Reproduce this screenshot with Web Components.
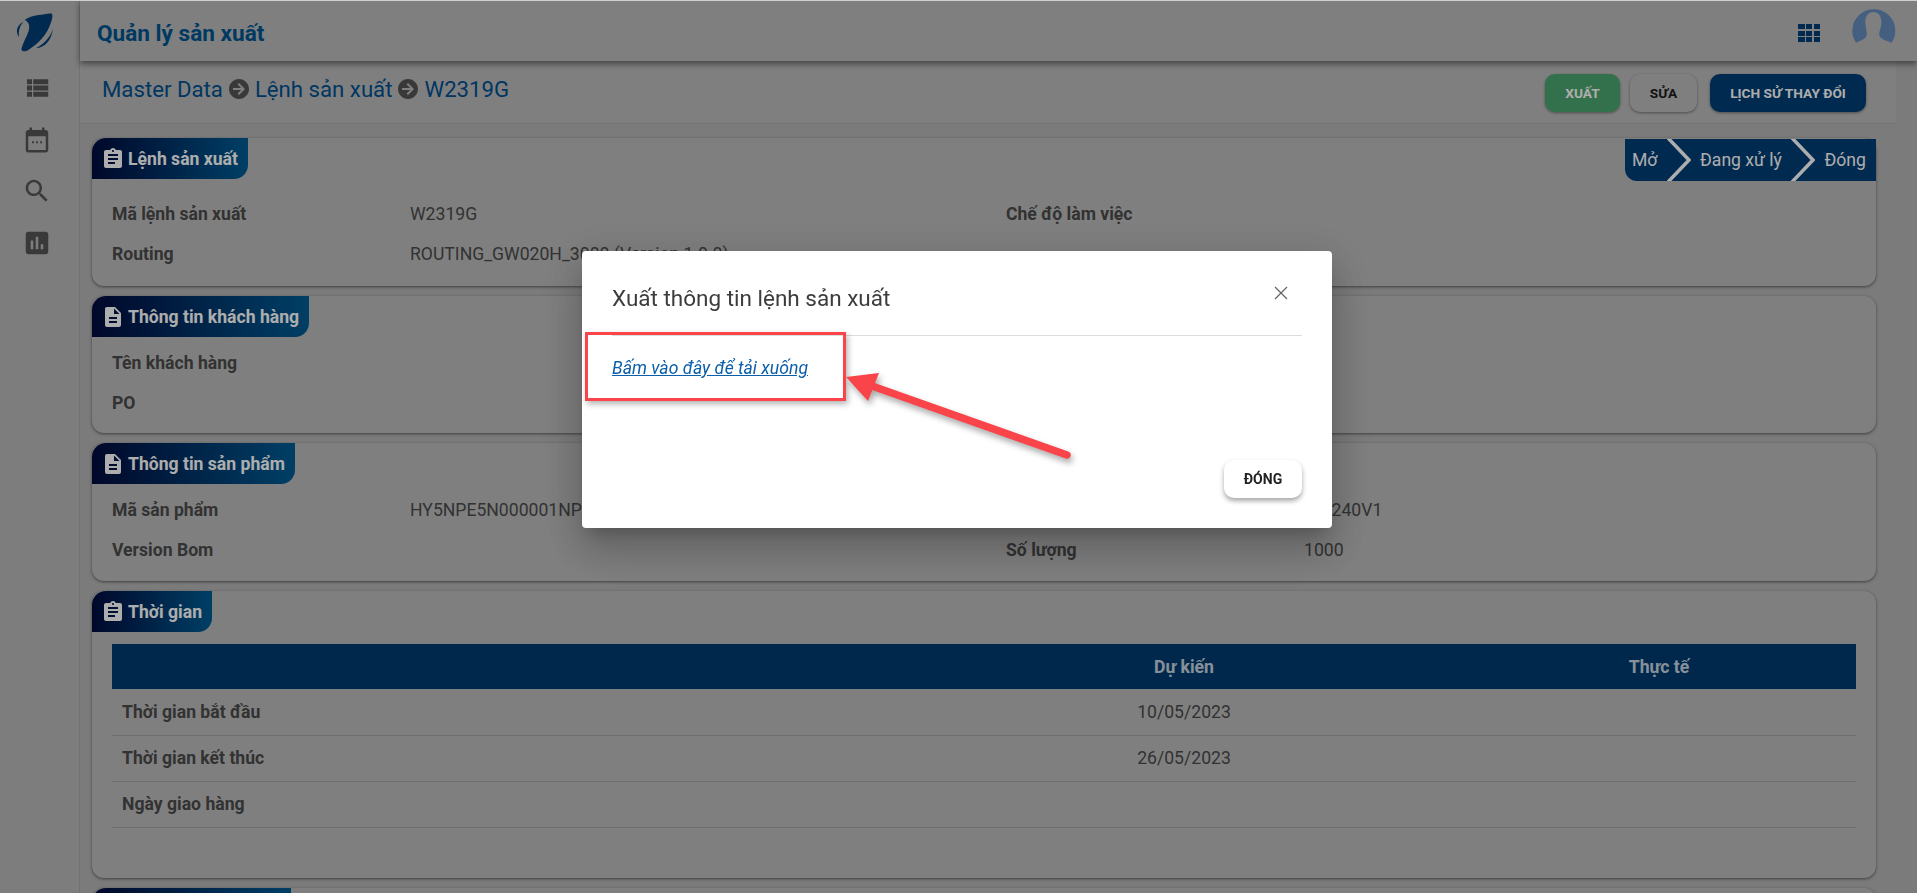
<!DOCTYPE html>
<html lang="vi">
<head>
<meta charset="utf-8">
<title>Quản lý sản xuất</title>
<style>
  html, body { margin: 0; height: 100%; overflow: hidden; }
  body { font-family: Roboto, "Liberation Sans", sans-serif; background: #b5b5b5; color: #4a4a4a; }
</style>
</head>
<body>
<app-shell>
  <side-nav slot="nav"></side-nav>
  <top-bar slot="top" heading="Quản lý sản xuất"></top-bar>
  <page-head slot="top"></page-head>

  <info-card heading="Lệnh sản xuất" icon="assignment" style="--body-pad:15px 20px 12px">
    <step-bar slot="aside" steps="Mở,Đang xử lý,Đóng"></step-bar>
    <info-row label="Mã lệnh sản xuất" value="W2319G" label2="Chế độ làm việc"></info-row>
    <info-row label="Routing" value="ROUTING_GW020H_3000 (Version 1.0.0)"></info-row>
  </info-card>

  <info-card heading="Thông tin khách hàng" icon="description" style="--body-pad:6px 20px 10px">
    <info-row label="Tên khách hàng"></info-row>
    <info-row label="PO"></info-row>
  </info-card>

  <info-card heading="Thông tin sản phẩm" icon="description" style="--body-pad:6px 20px 11px">
    <info-row label="Mã sản phẩm" value="HY5NPE5N000001NP" value2="GW240V1"></info-row>
    <info-row label="Version Bom" label2="Số lượng" value2="1000"></info-row>
  </info-card>

  <info-card heading="Thời gian" icon="assignment" style="--body-pad:12px 20px 50px">
    <time-table></time-table>
  </info-card>

  <info-card icon="none" style="--tab-width:199px"></info-card>
</app-shell>

<export-dialog heading="Xuất thông tin lệnh sản xuất" link="Bấm vào đây để tải xuống" close="ĐÓNG"></export-dialog>

<script>
const ICONS = {
  assignment: "M19 3h-4.18C14.4 1.84 13.3 1 12 1c-1.3 0-2.4.84-2.82 2H5c-1.1 0-2 .9-2 2v14c0 1.1.9 2 2 2h14c1.1 0 2-.9 2-2V5c0-1.1-.9-2-2-2zm-7 0c.55 0 1 .45 1 1s-.45 1-1 1-1-.45-1-1 .45-1 1-1zm2 14H7v-2h7v2zm3-4H7v-2h10v2zm0-4H7V7h10v2z",
  description: "M14 2H6c-1.1 0-1.99.9-1.99 2L4 20c0 1.1.89 2 1.99 2H18c1.1 0 2-.9 2-2V8l-6-6zm2 16H8v-2h8v2zm0-4H8v-2h8v2zm-3-5V3.5L18.5 9H13z",
  list: "M4 14h4v-4H4v4zm0 5h4v-4H4v4zM4 9h4V5H4v4zm5 5h12v-4H9v4zm0 5h12v-4H9v4zM9 5v4h12V5H9z",
  calendar: "M19 4h-1V2h-2v2H8V2H6v2H5c-1.11 0-2 .9-2 2v14c0 1.1.89 2 2 2h14c1.1 0 2-.9 2-2V6c0-1.1-.9-2-2-2zm0 16H5V9h14v11zM8 13h1.5v1.5H8zm3.25 0h1.5v1.5h-1.5zm3.25 0H16v1.5h-1.5z",
  search: "M15.5 14h-.79l-.28-.27C15.41 12.59 16 11.11 16 9.5 16 5.91 13.09 3 9.5 3S3 5.91 3 9.5 5.91 16 9.5 16c1.61 0 3.09-.59 4.23-1.57l.27.28v.79l5 4.99L20.49 19l-4.99-5zm-6 0C7.01 14 5 11.99 5 9.5S7.01 5 9.5 5 14 7.01 14 9.5 11.99 14 9.5 14z",
  chart: "M19 3H5c-1.1 0-2 .9-2 2v14c0 1.1.9 2 2 2h14c1.1 0 2-.9 2-2V5c0-1.1-.9-2-2-2zM9 17H7v-7h2v7zm4 0h-2V7h2v10zm4 0h-2v-4h2v4z",
  arrowCircle: "M12 2C6.48 2 2 6.48 2 12s4.48 10 10 10 10-4.48 10-10S17.52 2 12 2zm0 16l-1.4-1.4 3.6-3.6H6v-2h8.2l-3.6-3.6L12 6l6 6-6 6z"
};
const icon = (name, size, color) =>
  `<svg width="${size}" height="${size}" viewBox="0 0 24 24" fill="${color}" fill-rule="evenodd" style="display:block;flex:none"><path d="${ICONS[name]}"/></svg>`;

class AppShell extends HTMLElement {
  constructor() {
    super();
    this.attachShadow({ mode: "open" });
    this.shadowRoot.innerHTML = `
      <style>
        :host { display: flex; height: 100vh; overflow: hidden; }
        .main { flex: 1; min-width: 0; display: flex; flex-direction: column; }
        .content { display: flex; flex-direction: column; gap: 10px; margin: 14px 41px 0 12px; }
      </style>
      <slot name="nav"></slot>
      <div class="main">
        <slot name="top"></slot>
        <div class="content"><slot></slot></div>
      </div>
    `;
  }
}
customElements.define("app-shell", AppShell);

class SideNav extends HTMLElement {
  constructor() {
    super();
    this.attachShadow({ mode: "open" });
    this.shadowRoot.innerHTML = `
      <style>
        :host { display: flex; flex: none; flex-direction: column; align-items: center; box-sizing: border-box; width: 80px; padding: 5px 5px 0 0; border-right: 1px solid #a9a9a9; background: #b8b8b8; }
        .logo { display: block; margin: 0 0 13px 2px; }
        .icons { display: flex; flex-direction: column; gap: 21.5px; }
      </style>
      <svg class="logo" width="60" height="55" viewBox="0 0 180 165" fill="#003e75">
        <path d="M132 26C120 24 105 30 92 30 75 32 60 38 50 45 62 50 66 62 62 78 56 96 44 115 40 132 42 142 52 140 62 134 90 118 118 88 128 55 132 44 135 34 132 26Z"/>
        <path d="M47 50C36 55 26 66 27 80 28 88 30 92 33 96 31 80 34 62 47 50Z"/>
        <path d="M135 70C130 92 112 115 84 130 110 128 130 108 135 70Z"/>
      </svg>
      <div class="icons">
        ${icon("list", 30, "#555")}
        ${icon("calendar", 30, "#555")}
        ${icon("search", 30, "#555")}
        ${icon("chart", 30, "#555")}
      </div>
    `;
  }
}
customElements.define("side-nav", SideNav);

class TopBar extends HTMLElement {
  constructor() {
    super();
    this.attachShadow({ mode: "open" });
  }
  connectedCallback() {
    this.shadowRoot.innerHTML = `
      <style>
        :host { display: flex; flex: none; align-items: center; position: relative; z-index: 1; height: 61px; padding: 0 22px 0 17px; background: #bcbcbc; box-shadow: 0 3px 6px rgba(0,0,0,.45); }
        h1 { flex: 1; margin: 0 0 -5px; font-size: 22.6px; font-weight: 700; color: #00548f; }
        .apps { display: grid; grid-template-columns: repeat(3, 6.4px); grid-auto-rows: 5px; gap: 1.2px; margin: 5px 40px 0 0; }
        .apps i { background: #003e75; }
        .avatar { display: block; align-self: flex-start; margin: 0 -22px 0 -20px; }
      </style>
      <h1>${this.getAttribute("heading")}</h1>
      <div class="apps">${"<i></i>".repeat(9)}</div>
      <svg class="avatar" width="77" height="70" viewBox="0 0 231 210" fill="#658dbb">
        <path d="M48 128C60 122 78 118 80 105 82 95 76 85 76 65 76 45 88 36 100 36 112 36 124 45 124 65 124 85 116 95 118 105 120 118 140 122 155 128A64.5 64.5 0 1 0 48 128Z"/>
      </svg>
    `;
  }
}
customElements.define("top-bar", TopBar);

class PageHead extends HTMLElement {
  constructor() {
    super();
    this.attachShadow({ mode: "open" });
    const arrow = icon("arrowCircle", 24, "#555");
    this.shadowRoot.innerHTML = `
      <style>
        :host { display: flex; flex: none; align-items: center; justify-content: space-between; box-sizing: border-box; height: 63px; margin-right: 21px; padding: 2px 30px 0 22px; background: #bcbcbc; border-bottom: 1px solid #a9a9a9; }
        .crumbs { display: flex; align-items: center; gap: 4px; margin-top: -8px; font-size: 22.2px; color: #005090; }
        .btns { display: flex; gap: 10px; }
        button { height: 38px; padding: 0; border: 0; border-radius: 10px; font: 700 13.7px Roboto, sans-serif; box-shadow: 0 1px 3px rgba(0,0,0,.4); }
        .green { width: 75px; background: #4ca570; color: #fff; }
        .plain { width: 67px; background: #bcbcbc; color: #1a1a1a; margin-right: 3px; }
        .navy { width: 156px; background: #003e75; color: #fff; }
      </style>
      <div class="crumbs">
        <span>Master Data</span>${arrow}<span>Lệnh sản xuất</span>${arrow}<span>W2319G</span>
      </div>
      <div class="btns">
        <button class="green">XUẤT</button>
        <button class="plain">SỬA</button>
        <button class="navy">LỊCH SỬ THAY ĐỔI</button>
      </div>
    `;
  }
}
customElements.define("page-head", PageHead);

class InfoCard extends HTMLElement {
  constructor() {
    super();
    this.attachShadow({ mode: "open" });
  }
  connectedCallback() {
    const name = this.getAttribute("icon");
    const heading = this.getAttribute("heading") || "";
    this.shadowRoot.innerHTML = `
      <style>
        :host { display: block; flex: none; background: #bcbcbc; border-radius: 12px; box-shadow: 0 1px 3px rgba(0,0,0,.5); }
        .head { display: flex; justify-content: space-between; height: 41px; }
        .tab { display: flex; align-items: center; gap: 3px; box-sizing: border-box; min-width: var(--tab-width, 0); height: 41px; padding: 0 10px 0 9px; border-radius: 14px 0 14px 0; background: linear-gradient(90deg, #000c3e, #005d96); color: #fff; font-size: 17.6px; font-weight: 700; }
        .body { padding: var(--body-pad, 0); }
      </style>
      <div class="head">
        <div class="tab">${name !== "none" ? icon(name, 24, "#fff") : ""}${heading ? `<span>${heading}</span>` : ""}</div>
        <slot name="aside"></slot>
      </div>
      <div class="body"><slot></slot></div>
    `;
  }
}
customElements.define("info-card", InfoCard);

class StepBar extends HTMLElement {
  constructor() {
    super();
    this.attachShadow({ mode: "open" });
  }
  connectedCallback() {
    const chevron = `<svg width="24" height="42" viewBox="0 0 24 42" fill="none" stroke="#fff" stroke-width="3.5" style="display:block;flex:none"><path d="M1 -1L22 21 1 43"/></svg>`;
    const steps = this.getAttribute("steps").split(",");
    this.shadowRoot.innerHTML = `
      <style>
        :host { display: flex; align-items: center; box-sizing: border-box; width: 251px; height: 42px; margin-top: 1px; padding: 0 10px 0 7px; justify-content: space-between; background: #003e75; border-radius: 0 0 0 12px; color: #fff; font-size: 17.6px; overflow: hidden; }
      </style>
      ${steps.map((s) => `<span>${s}</span>`).join(chevron)}
    `;
  }
}
customElements.define("step-bar", StepBar);

class InfoRow extends HTMLElement {
  constructor() {
    super();
    this.attachShadow({ mode: "open" });
  }
  connectedCallback() {
    const get = (n) => this.getAttribute(n) || "";
    this.shadowRoot.innerHTML = `
      <style>
        :host { display: grid; grid-template-columns: 298px 596px 298px 1fr; align-items: center; height: 40px; font-size: 17.6px; white-space: nowrap; }
        b { font-weight: 700; }
      </style>
      <b>${get("label")}</b><span>${get("value")}</span>
      <b>${get("label2")}</b><span>${get("value2")}</span>
    `;
  }
}
customElements.define("info-row", InfoRow);

class TimeTable extends HTMLElement {
  constructor() {
    super();
    this.attachShadow({ mode: "open" });
    const rows = [
      ["Thời gian bắt đầu", "10/05/2023", ""],
      ["Thời gian kết thúc", "26/05/2023", ""],
      ["Ngày giao hàng", "", ""],
    ];
    this.shadowRoot.innerHTML = `
      <style>
        :host { display: block; }
        table { width: 100%; border-collapse: collapse; table-layout: fixed; font-size: 17.6px; }
        th { height: 45px; padding: 0 10px; background: #003b72; color: rgba(255,255,255,.8); text-align: center; }
        td { box-sizing: border-box; height: 46px; padding: 0 10px; border-bottom: 1px solid #a3a3a3; text-align: center; }
        td:first-child { text-align: left; font-weight: 700; }
      </style>
      <table>
        <colgroup><col style="width:794px"><col style="width:556px"><col></colgroup>
        <tr><th></th><th>Dự kiến</th><th>Thực tế</th></tr>
        ${rows.map((r) => `<tr>${r.map((c) => `<td>${c}</td>`).join("")}</tr>`).join("")}
      </table>
    `;
  }
}
customElements.define("time-table", TimeTable);

class ExportDialog extends HTMLElement {
  constructor() {
    super();
    this.attachShadow({ mode: "open" });
  }
  connectedCallback() {
    this.shadowRoot.innerHTML = `
      <style>
        :host { position: fixed; inset: 0; z-index: 10; display: flex; justify-content: center; align-items: flex-start; box-sizing: border-box; padding: 250px 3px 0 0; background: rgba(0,0,0,.32); border-top: 1px solid #cfcfcf; }
        .dialog { position: relative; display: flex; flex-direction: column; box-sizing: border-box; width: 750px; height: 277px; padding: 0 30px 30px; background: #fff; border-radius: 4px; color: #3c3c3c; box-shadow: 0 11px 15px -7px rgba(0,0,0,.2), 0 24px 38px 3px rgba(0,0,0,.14), 0 9px 46px 8px rgba(0,0,0,.12); }
        header { display: flex; justify-content: space-between; align-items: flex-start; flex: none; box-sizing: border-box; height: 85px; padding-top: 34px; border-bottom: 1px solid #ddd; }
        h2 { margin: 0; font-size: 22.5px; line-height: 26px; font-weight: 400; }
        .x { display: block; margin: 1px 14px 0 0; }
        .body { flex: 1; padding-top: 20px; }
        a { color: #0b5ea8; font-size: 17.6px; line-height: 24px; font-style: italic; text-decoration: underline; }
        footer { display: flex; justify-content: flex-end; }
        button { width: 78px; height: 38px; border: 0; border-radius: 10px; background: #fff; color: #222; font: 700 14px Roboto, sans-serif; box-shadow: 0 3px 5px rgba(0,0,0,.35); }
        .mark { position: absolute; left: 3px; top: 81px; box-sizing: border-box; width: 261px; height: 69px; border: 3px solid #f94449; box-shadow: 2px 3px 6px rgba(0,0,0,.3); }
        .arrow { position: absolute; left: 258px; top: 109px; overflow: visible; filter: drop-shadow(2px 4px 3px rgba(0,0,0,.35)); }
      </style>
      <div class="dialog">
        <header>
          <h2>${this.getAttribute("heading")}</h2>
          <svg class="x" width="14" height="14" viewBox="0 0 14 14" stroke="#666" stroke-width="1.3"><path d="M1 1L13 13M13 1L1 13"/></svg>
        </header>
        <div class="body"><a href="#">${this.getAttribute("link")}</a></div>
        <footer><button>${this.getAttribute("close")}</button></footer>
        <div class="mark"></div>
        <svg class="arrow" width="240" height="110" viewBox="0 0 240 110" fill="#f94449">
          <path d="M6 17L39 13 28 41Z"/>
          <path d="M32 26L227 95" stroke="#f94449" stroke-width="7.5" stroke-linecap="round"/>
        </svg>
      </div>
    `;
  }
}
customElements.define("export-dialog", ExportDialog);
</script>
</body>
</html>
